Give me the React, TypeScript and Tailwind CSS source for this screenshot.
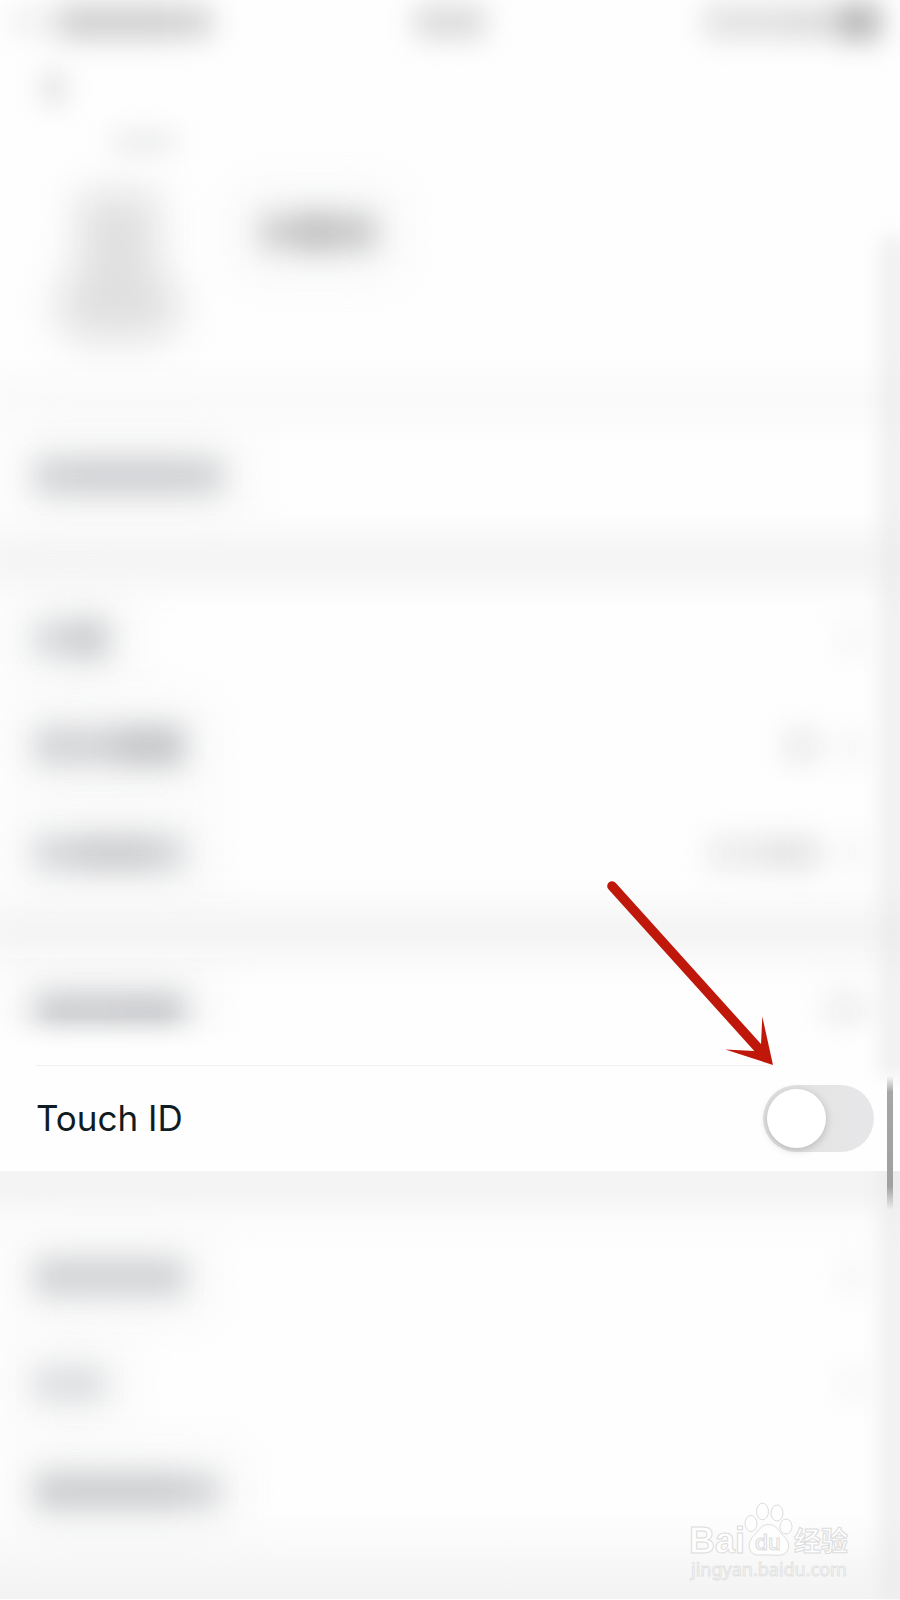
import { useState } from "react";

type Part = { size: string; tone: string };

type Row = { id: string; label: Part[]; value?: Part[]; chevron?: boolean };

const ACCOUNT_ROWS: Row[] = [
  {
    id: "a1",
    label: [
      { size: "w-10 h-9", tone: "bg-[#cdced1]" },
      { size: "w-[106px] h-9", tone: "bg-[#c8c9cc]" },
      { size: "w-10 h-9", tone: "bg-[#cdced1]" },
    ],
  },
];

const PROFILE_ROWS: Row[] = [
  {
    id: "p1",
    label: [
      { size: "w-8 h-8", tone: "bg-[#d1d3d6]" },
      { size: "w-10 h-10", tone: "bg-[#c8c9cc]" },
    ],
    chevron: true,
  },
  {
    id: "p2",
    label: [
      { size: "w-20 h-9", tone: "bg-[#cdced1]" },
      { size: "w-[68px] h-10", tone: "bg-[#bfc0c3]" },
    ],
    value: [{ size: "w-9 h-8", tone: "bg-[#eaeaea]" }],
    chevron: true,
  },
  {
    id: "p3",
    label: [
      { size: "w-10 h-8", tone: "bg-[#cfd1d4]" },
      { size: "w-20 h-9", tone: "bg-[#c6c7ca]" },
      { size: "w-7 h-8", tone: "bg-[#d1d3d6]" },
    ],
    value: [
      { size: "w-14 h-8", tone: "bg-[#ebebeb]" },
      { size: "w-14 h-8", tone: "bg-[#e3e3e3]" },
    ],
    chevron: true,
  },
];

const MORE_ROWS: Row[] = [
  { id: "m1", label: [{ size: "w-[148px] h-9", tone: "bg-[#cccdd0]" }], chevron: true },
  { id: "m2", label: [{ size: "w-[68px] h-8", tone: "bg-[#d9dadd]" }], chevron: true },
  {
    id: "m3",
    label: [
      { size: "w-[146px] h-9", tone: "bg-[#c6c7ca]" },
      { size: "w-9 h-8", tone: "bg-[#cdced1]" },
    ],
  },
];

// Hidden content, drawn as a soft smear with a wide halo behind it
function Smear({ parts }: { parts: Part[] }) {
  return (
    <div aria-hidden="true" className="relative flex items-center">
      <div className="absolute -inset-5 bg-[#eeefef] opacity-60 blur-xl" />
      <div className="flex items-center opacity-85 blur-[14px]">
        {parts.map((part, i) => (
          <div key={i} className={`${part.size} ${part.tone}`} />
        ))}
      </div>
    </div>
  );
}

function SmearRow({ row }: { row: Row }) {
  return (
    <li className="flex h-[107px] items-center justify-between pl-9 pr-9">
      <Smear parts={row.label} />
      <div aria-hidden="true" className="flex items-center gap-6 blur-[14px]">
        {row.value && (
          <div className="flex items-center">
            {row.value.map((part, i) => (
              <div key={i} className={`${part.size} ${part.tone}`} />
            ))}
          </div>
        )}
        {row.chevron && <div className="h-8 w-5 bg-[#f3f3f3]" />}
      </div>
    </li>
  );
}

function StatusBar() {
  return (
    <div aria-hidden="true" className="grid h-11 grid-cols-3 items-center">
      <div className="flex items-center pl-3 blur-[14px]">
        <div className="h-6 w-12 bg-[#eeeeee]" />
        <div className="h-9 w-28 bg-[#d0d0d0]" />
        <div className="h-8 w-10 bg-[#d2d2d2]" />
      </div>
      <div className="mx-auto h-8 w-[70px] bg-[#d9d9d9] blur-[14px]" />
      <div className="flex items-center justify-end pr-5 blur-[14px]">
        <div className="h-8 w-20 bg-[#e0e0e0]" />
        <div className="h-8 w-14 bg-[#dbdbdb]" />
        <div className="h-9 w-10 bg-[#b2b2b2]" />
      </div>
    </div>
  );
}

function Header() {
  return (
    <header aria-hidden="true" className="h-[338px]">
      <div className="flex h-[88px] items-center pl-11">
        <div className="h-8 w-5 bg-[#dcdcdc] blur-[14px]" />
      </div>
      <div className="flex h-5 items-center pl-28">
        <div className="h-4 w-16 bg-[#e3e5e4] blur-[14px]" />
      </div>
      <div className="flex items-start gap-20 pl-14">
        <div className="flex flex-col items-center pt-10 blur-[20px]">
          <div className="h-20 w-20 bg-[#e0e0e0]" />
          <div className="h-[68px] w-[124px] rounded-[32px] bg-[#e0e0e0]" />
        </div>
        <div className="flex items-center pt-[60px]">
          <Smear
            parts={[
              { size: "w-9 h-9", tone: "bg-[#cbcbcb]" },
              { size: "w-10 h-10", tone: "bg-[#bababa]" },
              { size: "w-10 h-9", tone: "bg-[#c3c3c3]" },
            ]}
          />
        </div>
      </div>
    </header>
  );
}

function Arrow() {
  return (
    <svg
      aria-hidden="true"
      viewBox="605 880 170 186"
      className="pointer-events-none absolute bottom-full right-[125px] h-[186px] w-[170px]"
    >
      <path d="M612 887L759 1050" stroke="#bf180b" strokeWidth="9.600" strokeLinecap="round" />
      <path d="M773 1066L725.300 1050.600L754.500 1052L761 1045.500L762.300 1017.500Z" fill="#bf180b" />
    </svg>
  );
}

function Watermark() {
  return (
    <svg
      viewBox="0 0 200 120"
      role="img"
      aria-label="Baidu 经验"
      className="absolute bottom-0 right-[30px] z-[2] h-[120px] w-[200px]"
      fill="#fefefe"
      stroke="#dcdcdc"
      strokeWidth="1"
    >
      <text x="19" y="73" className="font-['Liberation_Sans',sans-serif] text-[36px] font-bold">Bai</text>
      <ellipse cx="81" cy="43.500" rx="6" ry="8" />
      <ellipse cx="92.500" cy="31.500" rx="6" ry="8.300" />
      <ellipse cx="107" cy="33" rx="6" ry="8" />
      <ellipse cx="116" cy="46.500" rx="6" ry="7.500" />
      <path d="M98.500 44.500C91 44.500 88.500 51 83.500 56C79 60.500 78 66 80.500 71C84 77 92 74.500 98.500 75C105 74.500 112 77.500 117 71.500C120 66 118.500 61 114 56.500C109 51.500 106.500 44.500 98.500 44.500Z" />
      <text x="85" y="70" className="font-['Inter',sans-serif] text-[21px] font-medium">du</text>
      <text x="124" y="71" className="font-['Noto_Sans_CJK_SC',sans-serif] text-[27px] font-bold">经验</text>
      <text x="21" y="96" stroke="#e3e3e3" className="font-['Noto_Sans',sans-serif] text-[18px]">
        jingyan.baidu.com
      </text>
    </svg>
  );
}

export default function App() {
  const [touchId, setTouchId] = useState(false);

  return (
    <main className="relative min-h-screen overflow-hidden bg-[#fefefe] font-['Inter',sans-serif]">
      {/* Shaded right edge */}
      <div className="absolute -right-2 bottom-0 top-[236px] z-[1] w-7 bg-[#e6e6e6] opacity-60 blur-[10px]" />

      <StatusBar />
      <Header />

      <div className="-mx-4 h-9 bg-[#f8f8f8] blur-lg" />
      <ul className="pb-[6px] pt-1">
        {ACCOUNT_ROWS.map((row) => (
          <SmearRow key={row.id} row={row} />
        ))}
      </ul>

      <div className="-mx-4 h-[50px] bg-[#f4f4f4] blur-lg" />
      <ul>
        {PROFILE_ROWS.map((row) => (
          <SmearRow key={row.id} row={row} />
        ))}
      </ul>

      <div className="-mx-4 h-[52px] bg-[#f4f4f4] blur-lg" />
      <div
        aria-hidden="true"
        className="flex h-[107px] items-center justify-between px-9 [mask-image:linear-gradient(to_bottom,black_55%,transparent_85%)]"
      >
        <Smear
          parts={[
            { size: "w-20 h-10", tone: "bg-[#c6c7ca]" },
            { size: "w-[68px] h-10", tone: "bg-[#c4c5c8]" },
          ]}
        />
        <div className="h-10 w-9 bg-[#ececec] blur-lg" />
      </div>

      <div className="relative z-10 bg-[linear-gradient(to_bottom,transparent,#fefefe_24px)]">
        <div className="ml-9 mr-32 h-px bg-[#f0f0f0]" />
        <div className="flex h-[105px] items-center justify-between pl-9 pr-[26px]">
          <label htmlFor="touch-id" className="text-[35px] text-[#101c23]">
            Touch ID
          </label>
          <input
            id="touch-id"
            type="checkbox"
            role="switch"
            checked={touchId}
            onChange={(e) => setTouchId(e.target.checked)}
            className="h-[67px] w-[111px] cursor-pointer appearance-none rounded-full bg-gradient-to-r from-[#e2e2e2] to-[#e7e7e9] p-1 transition-colors before:block before:size-[59px] before:rounded-full before:bg-white before:shadow-[0_2px_8px_rgba(0,0,0,0.2)] before:transition-transform checked:from-green-500 checked:to-green-500 checked:before:translate-x-11"
          />
        </div>
        <Arrow />
        {/* Scroll thumb */}
        <div className="absolute right-[7px] top-[11px] h-[134px] w-[6px] bg-[linear-gradient(to_bottom,transparent,#a6a6a6_12%,#a0a0a0_82%,transparent)]" />
      </div>

      <div className="h-[52px] bg-gradient-to-b from-[#f4f4f4] from-40% to-[#fcfcfc]" />
      <ul className="bg-[linear-gradient(to_bottom,#fcfcfc,#fefefe_32px)]">
        {MORE_ROWS.map((row) => (
          <SmearRow key={row.id} row={row} />
        ))}
      </ul>
      <div className="-mt-8 h-[87px] bg-gradient-to-b from-[#fefefe] to-[#f3f3f3]" />

      <Watermark />
    </main>
  );
}
